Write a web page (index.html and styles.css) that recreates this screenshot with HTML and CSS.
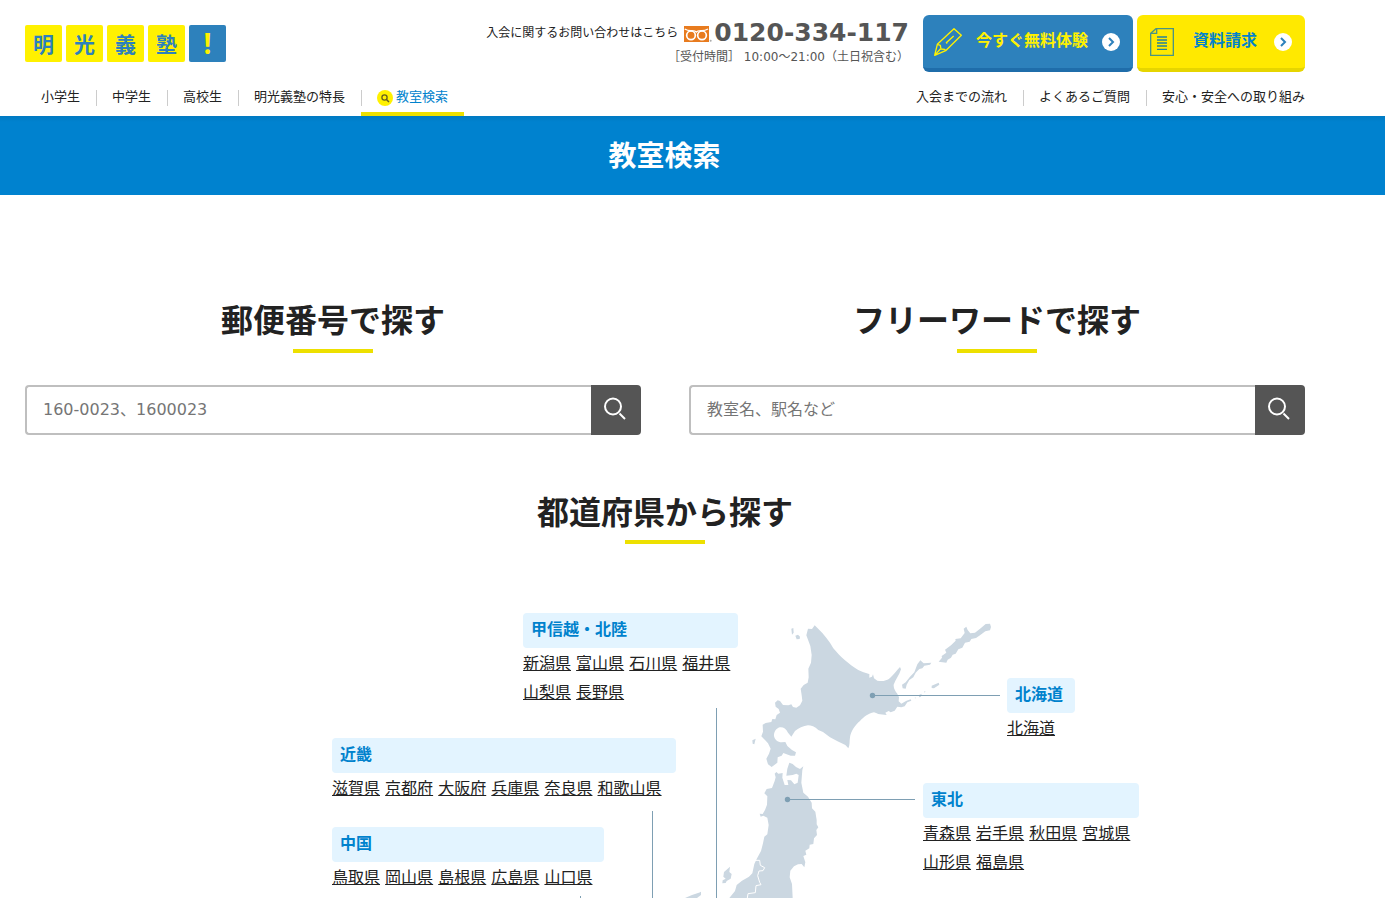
FILE: index.html
```html
<!DOCTYPE html>
<html lang="ja">
<head>
<meta charset="utf-8">
<meta name="viewport" content="width=device-width, initial-scale=1">
<title>教室検索</title>
<link rel="stylesheet" href="styles.css">
</head>
<body>
<header class="header">
  <div class="header-top">
    <a class="logo" href="#"><span>明</span><span>光</span><span>義</span><span>塾</span><span class="logo-mark">!</span></a>
    <div class="contact">
      <div class="contact-line">
        <span>入会に関するお問い合わせはこちら</span>
        <svg class="dial" viewBox="0 0 84 48" aria-hidden="true"><rect width="75" height="48" fill="#e87b1e"/><path d="M2 9q10 6 22 5 10 0 13 4 3-4 13-4 12 1 22-5" fill="none" stroke="#fff" stroke-width="4"/><circle cx="21" cy="28" r="13" fill="none" stroke="#fff" stroke-width="5"/><circle cx="54" cy="28" r="13" fill="none" stroke="#fff" stroke-width="5"/><circle cx="80" cy="44" r="3" fill="#aaa"/></svg>
        <strong class="tel">0120-334-117</strong>
      </div>
      <p class="hours">［受付時間］ 10:00～21:00（土日祝含む）</p>
    </div>
    <div class="actions">
      <a class="action action-trial" href="#">
        <svg class="action-icon" viewBox="0 0 84 84" fill="none" stroke="#fff100" stroke-width="4" stroke-linejoin="round" aria-hidden="true"><path d="M2 82l8-33L60 2l22 20-47 46zM10 49l9 3 2 11 11 1 3 4M19 63L2 82M36 45l23-21M36 45l4 0"/></svg>
        <span>今すぐ無料体験</span>
        <svg class="arrow" viewBox="0 0 18 18" aria-hidden="true"><circle cx="9" cy="9" r="9" fill="#fff"/><path d="M7 5l4 4-4 4" fill="none" stroke="#2d81bc" stroke-width="2"/></svg>
      </a>
      <a class="action action-request" href="#">
        <svg class="action-icon" viewBox="0 0 84 84" fill="none" stroke="#4b9483" stroke-width="4" aria-hidden="true"><path d="M24 2h52v80H8V16zM26 2v14H8"/><path d="M27 27h30M27 36h30M27 45h30M27 54h30M27 64h30" stroke="#258399"/></svg>
        <span>資料請求</span>
        <svg class="arrow" viewBox="0 0 18 18" aria-hidden="true"><circle cx="9" cy="9" r="9" fill="#fff"/><path d="M7 5l4 4-4 4" fill="none" stroke="#2d81bc" stroke-width="2"/></svg>
      </a>
    </div>
  </div>
  <div class="header-nav">
    <nav aria-label="メイン">
      <ul class="nav">
        <li><a href="#">小学生</a></li>
        <li><a href="#">中学生</a></li>
        <li><a href="#">高校生</a></li>
        <li><a href="#">明光義塾の特長</a></li>
        <li class="current"><a href="#"><svg class="nav-icon" viewBox="0 0 16 16" aria-hidden="true"><circle cx="8" cy="8" r="8" fill="#fff100"/><circle cx="7.500" cy="7.500" r="2.600" fill="none" stroke="#665f20" stroke-width="1.300"/><path d="M9.500 9.500l2.500 2.500" stroke="#665f20" stroke-width="1.500"/></svg>教室検索</a></li>
      </ul>
    </nav>
    <nav aria-label="サブ">
      <ul class="nav nav-sub">
        <li><a href="#">入会までの流れ</a></li>
        <li><a href="#">よくあるご質問</a></li>
        <li><a href="#">安心・安全への取り組み</a></li>
      </ul>
    </nav>
  </div>
</header>
<div class="banner"><h1>教室検索</h1></div>
<main class="main">
  <div class="searches">
    <section>
      <h2 class="heading"><label for="zip">郵便番号で探す</label></h2>
      <form class="search">
        <input id="zip" type="text" placeholder="160-0023、1600023">
        <button type="button" aria-label="検索"><svg viewBox="0 0 24 24" fill="none" stroke="#fff" stroke-width="2" aria-hidden="true"><circle cx="10" cy="9.500" r="8"/><path d="M16.500 16.500l5.500 5.500"/></svg></button>
      </form>
    </section>
    <section>
      <h2 class="heading"><label for="word">フリーワードで探す</label></h2>
      <form class="search">
        <input id="word" type="text" placeholder="教室名、駅名など">
        <button type="button" aria-label="検索"><svg viewBox="0 0 24 24" fill="none" stroke="#fff" stroke-width="2" aria-hidden="true"><circle cx="10" cy="9.500" r="8"/><path d="M16.500 16.500l5.500 5.500"/></svg></button>
      </form>
    </section>
  </div>
  <section class="area">
    <h2 class="heading">都道府県から探す</h2>
    <div class="map">
      <svg class="map-art" viewBox="165 600 1000 298" aria-hidden="true">
        <svg x="740" y="610" width="270" height="170" viewBox="0 0 810 510" fill="#cbd7e1">
          <path d="M224 46L236 58C250 72 268 92 280 115C300 140 330 165 350 177C362 185 380 190 388 192L388 203L396 200L399 193L402 205L412 212C425 215 440 213 450 204C460 195 470 182 480 171L483 178C478 195 466 210 461 224C460 235 467 244 471 250L477 262L476 274L484 281L498 273L512 268L514 272L502 277L494 289L484 292L472 290L464 302L452 307L446 303L436 308L440 315L420 313C412 313 408 308 402 307C385 310 370 322 360 333C345 345 332 365 330 382C328 395 330 405 325 415L316 405C300 398 285 390 270 382L249 366L235 360C225 350 213 346 204 346C190 348 175 355 165 363L154 380L144 368C138 355 128 350 119 352C108 355 101 367 102 378C104 388 113 397 125 397L136 396L142 408L156 420L168 427L165 437L152 437L130 429L125 437L113 442L112 458L95 471L84 463L79 446L87 431L92 416L84 400L75 390L64 379L69 365L68 344L77 339L94 336L97 327L106 328L110 315L120 308L116 297L107 290L105 278L113 271L120 273L129 285L145 286L154 283L159 291L169 293L180 286L187 272L185 256L182 236L191 225L203 218L206 202L205 176L213 158L215 135L211 108L199 76L204 56L216 57Z"/>
          <path d="M154 56l6-2 1 14-5 6zM166 77l8-3 6 6-1 7-9 1zM37 391l10-5-4 17-5-2zM486 224l11-7 13-17 13-13 9-24 9-12 10 9 23-2-4 6-17 3-6 8-9 2-11 11-7 14-12 8-8 14-3 12-9-1zM596 155l10-12-1-5 14-10-4-9 18-13 14-14-1-5 16-2 12-16-3-13 8-6 4 10 8 10 14-2 17-13 15-13 13-1 3 10-3 10-14 3-16 12-12 8-14 3-5 8-14 3-8 15-12 5-8 13-9 3-5 9-10 6-4 9z"/>
          <path d="M575 227l21-9 2 6-16 11-7-1zM552 245l4-2-1 5zM537 255l8-4-2 9-6 2zM524 263l3-1-1 4z"/>
        </svg>
        <svg x="700" y="750" width="230" height="148" viewBox="0 0 690 444" fill="#cbd7e1">
          <path d="M224 71L229 66L235 71L248 69L247 83L254 105L265 105L262 90L273 91L283 103L293 98L296 75L289 71L278 75L259 77L262 56L268 38L278 42L288 51L300 57L310 49L307 60L304 98L310 128L324 140L335 158L336 175L346 185L350 210L350 223L355 232L349 240L351 255L342 265L340 282L329 284L328 295L316 302L319 314L310 318L316 337L313 352L305 342L294 343L282 349L271 362L269 382L276 402L278 444H88L105 423L110 405L126 392L147 380L157 370L163 342L170 327L183 303L189 280L193 260L202 253L206 225L202 203L190 197L182 200L179 191L188 192L195 180L201 164L202 139L193 130L200 117L216 114L224 93L227 82Z"/>
          <path d="M90 350l-2 16 7 6-3 14-12 7-3 6-10 1 1-9 9-5-7-6 2-14zM0 425l3 2-2 8H0z"/>
          <path d="M165 331h14l2 15 13 7-5 9-12 1-4 14 6 20 4 7-15 3-2 21-22 3-2 13" fill="none" stroke="#fff" stroke-width="3"/>
        </svg>
        <path d="M685 898l7-3 9-3v3l-4 3z" fill="#cbd7e1"/>
        <g stroke="#7e9fb3"><path d="M873 695.500h127M788 799.500h127M716.500 708v190M652.500 811v87M580.500 896v2" fill="none"/></g>
        <circle cx="872.500" cy="695.500" r="2.700" fill="#7e9fb3"/><circle cx="787.500" cy="799.500" r="2.700" fill="#7e9fb3"/>
      </svg>
      <section class="region koshinetsu"><h3>甲信越・北陸</h3><p><a href="#">新潟県</a> <a href="#">富山県</a> <a href="#">石川県</a> <a href="#">福井県</a> <a href="#">山梨県</a> <a href="#">長野県</a></p></section>
      <section class="region kinki"><h3>近畿</h3><p><a href="#">滋賀県</a> <a href="#">京都府</a> <a href="#">大阪府</a> <a href="#">兵庫県</a> <a href="#">奈良県</a> <a href="#">和歌山県</a></p></section>
      <section class="region chugoku"><h3>中国</h3><p><a href="#">鳥取県</a> <a href="#">岡山県</a> <a href="#">島根県</a> <a href="#">広島県</a> <a href="#">山口県</a></p></section>
      <section class="region hokkaido"><h3>北海道</h3><p><a href="#">北海道</a></p></section>
      <section class="region tohoku"><h3>東北</h3><p><a href="#">青森県</a> <a href="#">岩手県</a> <a href="#">秋田県</a> <a href="#">宮城県</a> <a href="#">山形県</a> <a href="#">福島県</a></p></section>
    </div>
  </section>
</main>
</body>
</html>
```
FILE: styles.css
```css
* { box-sizing: border-box; }
body {
  margin: 0;
  background: #fff;
  color: #222;
  font: 16px/29px "DejaVu Sans", "Noto Sans CJK JP", sans-serif;
}
h1, h2, h3, p, ul { margin: 0; padding: 0; }
a { color: inherit; }
svg { display: block; flex: none; }

.header { padding: 15px 80px 0 25px; }
.header-top { display: flex; align-items: flex-start; }
.logo { display: flex; gap: 4px; margin: 10px auto 0 0; text-decoration: none; }
.logo span {
  width: 37px;
  height: 37px;
  border-radius: 2px;
  background: #fff100;
  color: #2d81bc;
  font: bold 21px/36px "Noto Sans CJK JP", sans-serif;
  text-align: center;
}
.logo .logo-mark { background: #2d81bc; color: #fff100; font-family: "Open Sans", sans-serif; font-size: 28px; }

.contact { margin-right: 14px; }
.contact-line { display: flex; align-items: center; height: 34px; font-size: 12px; }
.contact-line span { padding-top: 3px; }
.dial { width: 28px; height: 16px; margin: 4px 2px 0 6px; }
.tel { color: #555; font-size: 25px; }
.hours { color: #555; font-size: 12px; line-height: 16px; text-align: right; }

.actions { display: flex; gap: 4px; }
.action {
  display: flex;
  align-items: center;
  justify-content: space-between;
  height: 57px;
  padding: 0 13px 0 11px;
  border-bottom: 4px solid;
  border-radius: 6px;
  font-weight: bold;
  text-decoration: none;
}
.action span { padding-bottom: 2px; }
.action-trial { width: 210px; background: #2d81bc; border-color: #1f6daa; color: #fff100; }
.action-request { width: 168px; background: #ffe900; border-color: #e6d500; color: #0082cd; }
.action-icon { width: 28px; height: 28px; }
.arrow { width: 18px; height: 18px; }

.header-nav { display: flex; justify-content: space-between; padding-top: 18px; }
.nav { display: flex; list-style: none; font-size: 13px; line-height: 14px; }
.nav li { display: flex; height: 26px; border-bottom: 4px solid transparent; }
.nav li::before { content: ""; width: 1px; height: 16px; background: #ccc; }
.nav li:first-child::before { background: none; }
.nav a { display: flex; gap: 3px; height: 16px; padding: 0 16px 0 15px; text-decoration: none; }
.nav-sub li:last-child a { padding-right: 0; }
.nav .current { border-color: #ede000; color: #0082cd; }
.nav-icon { width: 16px; height: 16px; }

.banner {
  background: linear-gradient(#007ac2, #0082cf 6px);
  color: #fff;
  padding: 3px 56px 0 0;
}
.banner h1 { font-size: 28px; line-height: 76px; text-align: center; }

.main { padding: 102px 80px 0 25px; }
.searches { display: grid; grid-template-columns: 1fr 1fr; gap: 48px; }
.heading { font-size: 32px; line-height: 48px; text-align: center; }
.heading::after {
  content: "";
  display: block;
  width: 80px;
  height: 4px;
  margin: 4px auto 0;
  background: #ede000;
}
.search { display: flex; height: 50px; margin-top: 32px; }
.search input {
  flex: 1;
  min-width: 0;
  padding: 0 16px 2px;
  border: 2px solid #bfbfbf;
  border-right: 0;
  border-radius: 4px 0 0 4px;
  color: #222;
  font: inherit;
}
.search input::placeholder { color: #757575; }
.search button {
  display: grid;
  place-items: center;
  width: 50px;
  padding: 0 2px 2px 0;
  border: 0;
  border-radius: 0 4px 4px 0;
  background: #555;
}
.search svg { width: 24px; height: 24px; }

.area { padding-top: 54px; }
.area .heading::after { margin-top: 3px; }
.map { position: relative; width: 1000px; height: 298px; margin: 56px auto 0; overflow: hidden; }
.map-art { width: 1000px; height: 298px; }
.region { position: absolute; }
.region h3 {
  height: 35px;
  padding-left: 8px;
  border-radius: 4px;
  background: #e3f4ff;
  color: #0082cd;
  font-size: 16px;
  line-height: 34px;
}
.region p { padding-top: 1px; }
.region a { white-space: nowrap; }
.koshinetsu { left: 358px; top: 13px; width: 215px; }
.kinki { left: 167px; top: 138px; width: 344px; }
.chugoku { left: 167px; top: 227px; width: 272px; }
.hokkaido { left: 842px; top: 78px; width: 68px; }
.tohoku { left: 758px; top: 183px; width: 216px; }
```
